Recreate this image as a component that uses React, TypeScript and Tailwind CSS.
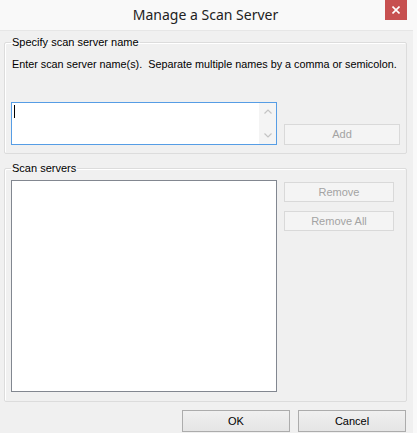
import React from "react";

function Btn({ label, disabled, className }: { label: string; disabled?: boolean; className?: string }) {
  return (
    <button
      disabled={disabled}
      className={
        "flex items-center justify-center border text-[11px] leading-none " +
        (disabled
          ? "border-[#d9d9d9] bg-[#f4f4f4] text-[#a3a3a3] "
          : "border-[#acacac] bg-gradient-to-b from-[#f0f0f0] to-[#e5e5e5] text-black ") +
        (className ?? "")
      }
    >
      {label}
    </button>
  );
}

function Group({ title, children, className }: { title: string; children: React.ReactNode; className?: string }) {
  return (
    <fieldset className={"border border-[#dcdcdc] rounded-[2px] shadow-[inset_1px_1px_0_#ffffff] " + (className ?? "")}>
      <legend className="px-[1px] leading-[13px] text-black">{title}</legend>
      {children}
    </fieldset>
  );
}

export default function App() {
  return (
    <div className="w-[417px] h-[433px] bg-[#f9f9f9] flex flex-col overflow-hidden font-['Liberation_Sans',Arial,sans-serif] text-[11px] text-black">
      {/* caption */}
      <div className="relative h-[30px] shrink-0">
        <div className="absolute inset-x-0 top-[5px] text-center pr-[6px] font-['Noto_Sans',sans-serif] text-[14px] leading-[20px] text-[#222]">
          Manage a Scan Server
        </div>
        <div className="absolute left-[385px] top-0 w-[22px] h-[20px] bg-[#c75050] flex items-center justify-center">
          <svg width="8" height="8" viewBox="0 0 8 8">
            <path d="M0.5 0.5 L7.5 7.5 M7.5 0.5 L0.5 7.5" stroke="#fff" strokeWidth="1.6" />
          </svg>
        </div>
      </div>

      {/* client area */}
      <div className="flex-1 w-[413px] bg-[#f0f0f0] border-t border-[#e6e6e6] pl-[4px] pr-[6px] pt-[5px] flex flex-col">
        <Group title="Specify scan server name" className="h-[118px] px-[6px]">
          <div className="mt-[9px] pl-[1px] leading-[13px] whitespace-pre text-[10.8px]">
            {"Enter scan server name(s).  Separate multiple names by a comma or semicolon."}
          </div>
          <div className="mt-[31px] flex items-end gap-[7px]">
            <div className="relative w-[266px] h-[43px] border border-[#569de5] bg-white flex">
              <div className="flex-1 pl-[2px] pt-[2px]">
                <div className="w-px h-[13px] bg-black" />
              </div>
              <div className="w-[17px] bg-[#f4f4f4] flex flex-col items-center justify-between py-[6px]">
                <svg width="8" height="5" viewBox="0 0 8 5">
                  <path d="M0.5 4.5 L4 1 L7.5 4.5" fill="none" stroke="#c4c4c4" strokeWidth="1.2" />
                </svg>
                <svg width="8" height="5" viewBox="0 0 8 5">
                  <path d="M0.5 0.5 L4 4 L7.5 0.5" fill="none" stroke="#c4c4c4" strokeWidth="1.2" />
                </svg>
              </div>
            </div>
            <Btn label="Add" disabled className="w-[116px] h-[21px]" />
          </div>
        </Group>

        <Group title="Scan servers" className="mt-[8px] h-[240px] px-[6px]">
          <div className="mt-[5px] flex gap-[7px]">
            <div className="w-[266px] h-[212px] border border-[#828790] bg-white" />
            <div className="flex flex-col gap-[9px] pt-[2px]">
              <Btn label="Remove" disabled className="w-[110px] h-[20px]" />
              <Btn label="Remove All" disabled className="w-[110px] h-[20px]" />
            </div>
          </div>
        </Group>

        <div className="mt-[8px] flex justify-end gap-[8px] pr-[1px]">
          <Btn label="OK" className="w-[108px] h-[22px]" />
          <Btn label="Cancel" className="w-[108px] h-[22px]" />
        </div>
      </div>
    </div>
  );
}
